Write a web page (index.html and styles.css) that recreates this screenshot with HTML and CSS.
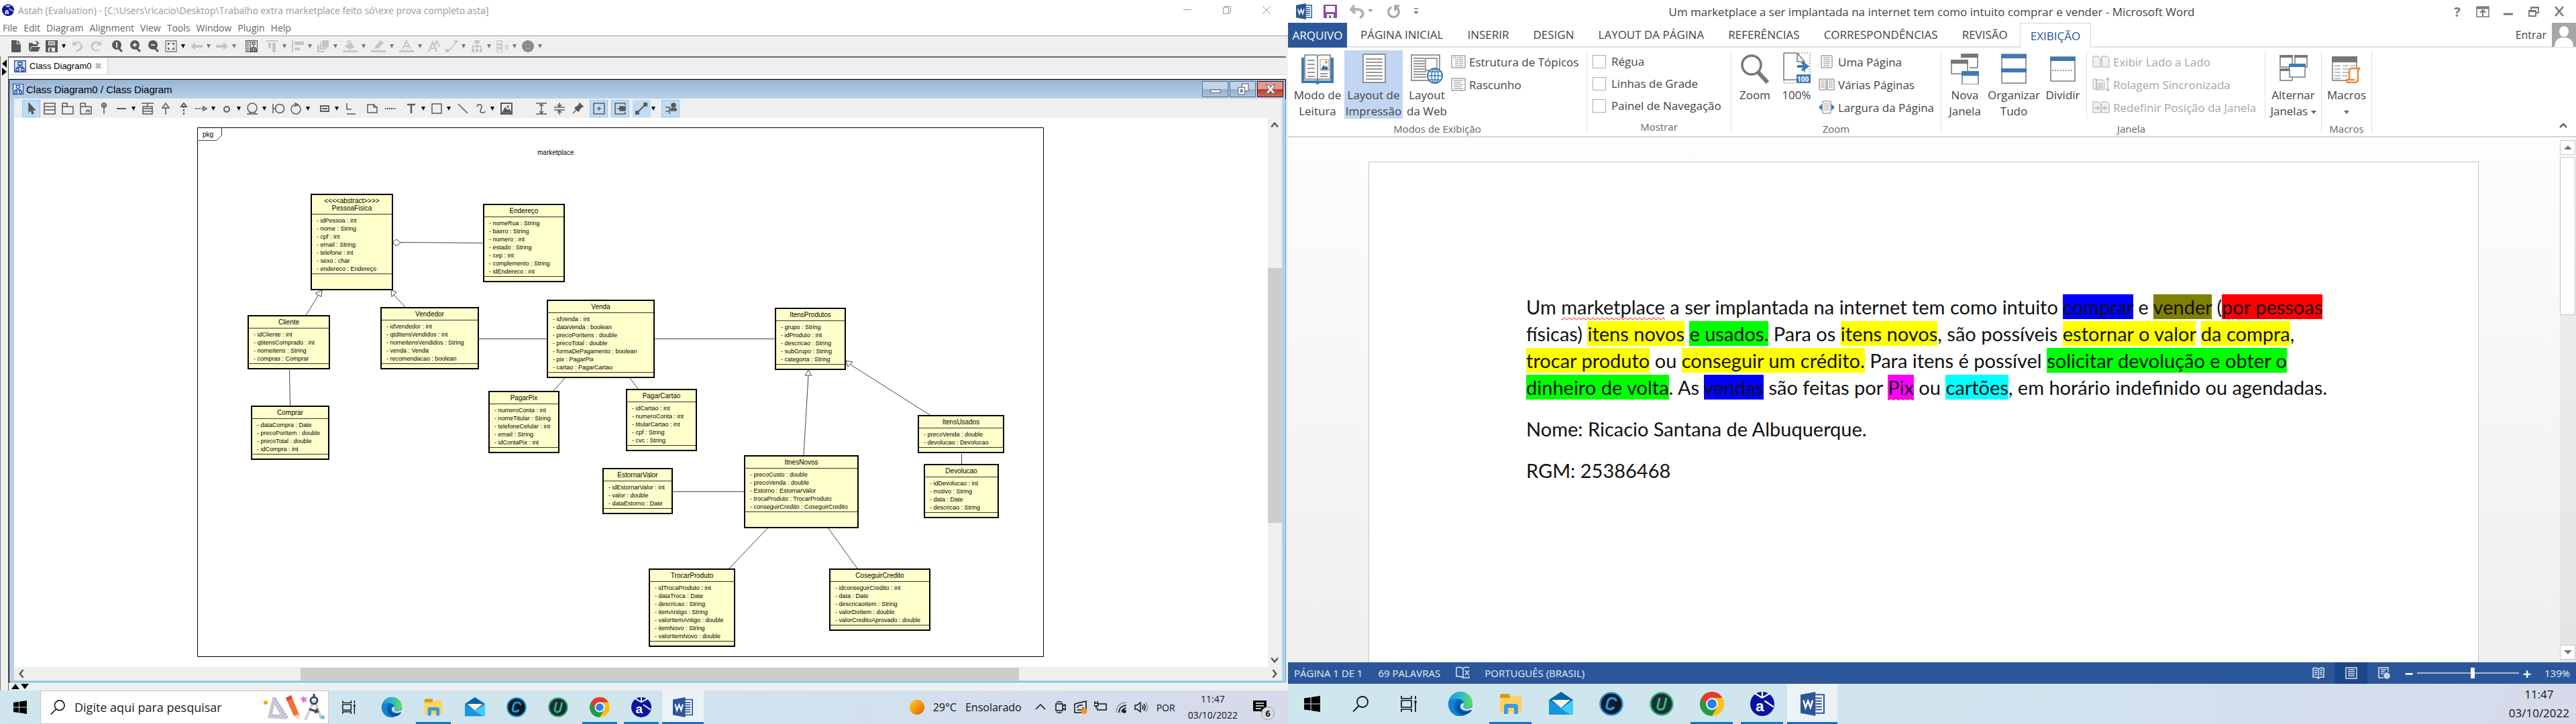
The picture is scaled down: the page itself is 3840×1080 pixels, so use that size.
FILE: index.html
```html
<!DOCTYPE html>
<html lang="pt-BR">
<head>
<meta charset="utf-8">
<title>Astah e Word</title>
<link rel="stylesheet" href="styles.css">
</head>
<body>
<svg class="defs" aria-hidden="true">
  <defs>
    <linearGradient id="gEdge" x1="0" y1="0" x2="1" y2="0"><stop offset="0" stop-color="#1b9de2"/><stop offset=".6" stop-color="#35c1b5"/><stop offset="1" stop-color="#6ae04c"/></linearGradient>
    <linearGradient id="gSun" x1="0" y1="0" x2="1" y2="1"><stop offset="0" stop-color="#ffd21a"/><stop offset="1" stop-color="#e85d00"/></linearGradient>
  </defs>
  <symbol id="start" viewBox="0 0 24 24"><path d="M0 3.500 9.500 2.200V11.400H0zM10.600 2 24 0V11.400H10.600zM0 12.600H9.500V21.800L0 20.500zM10.600 12.600H24V24L10.600 22z"/></symbol>
  <symbol id="search" viewBox="0 0 24 24"><g fill="none" stroke="#111" stroke-width="1.800"><circle cx="15" cy="9" r="8"/><path d="M9.500 15 1 23.500"/></g></symbol>
  <symbol id="taskview" viewBox="0 0 24 24"><path d="M1 0v4h15V0M1 24v-4h15v4M1 7h15v10H1zM22 0v5M22 11v13" fill="none" stroke="#111" stroke-width="1.700"/><path d="M20.500 7h3v4h-3z"/></symbol>
  <symbol id="edge" viewBox="0 0 36 36"><circle cx="18" cy="18" r="18" fill="#0c64b8"/><path d="M1 14C3 5 10 0 18 0c11 0 18 8 18 16 0 6-4 9-9 9-4 0-6-2-5-4 2-3 1-9-6-10C9 10 3 12 1 14z" fill="url(#gEdge)"/><path d="M0 18c2-6 9-8 14-6-5 3-7 9-4 15 2 5 7 8 12 8.500C10 39 0 30 0 18z" fill="#1482d8"/><path d="M16 17c-3 5 1 13 9 13 4 0 7-1 9-3 1 0 1 1 0 2-5 6-13 6-18 1-4-4-4-10 0-13z" fill="#0b4a94"/><path d="M22 17c3 0 0 4 0 5 1 5 9 4 14 0l-1 4c-5 3-12 3-16-1-2-3-1-8 3-8z" fill="#d2e6ef"/></symbol>
  <symbol id="explorer" viewBox="0 0 36 36"><path d="M2 6q0-3 3-3h9q3 0 3 3v5H2z" fill="#d99a0b"/><path d="M2 9h15l3-3h14v23q0 2-2 2H4q-2 0-2-2z" fill="#ffd25c"/><path d="M8 33V22q0-4 4-4h13q4 0 4 4v11h-6v-9h-9v9z" fill="#3a9ae0"/></symbol>
  <symbol id="mail" viewBox="0 0 36 36"><path d="M0 12 18 0l18 12-18 14z" fill="#0563ae"/><path d="M0 12l18 13L36 12v22H0z" fill="#2bb0ea"/><path d="M0 12l34 22H0z" fill="#1696dc"/><path d="M18 25 36 12v22h-4z" fill="#43cbf5"/><path d="M4 12h28L18 24z" fill="#f4f4f6"/></symbol>
  <symbol id="cc" viewBox="0 0 36 36"><circle cx="18" cy="18" r="16.500" fill="#15191c" stroke="#1b93dd" stroke-width="2.500"/><path d="M25 14c0-6-10-6-12-.500l-2 8c-1 5 8 6 11 1" fill="none" stroke="#109df8" stroke-width="3.500"/></symbol>
  <symbol id="uu" viewBox="0 0 36 36"><circle cx="18" cy="18" r="16.500" fill="#262a3b" stroke="#20ba72" stroke-width="2.500"/><path d="M15 9l-3 13c-1 6 9 6 10 0l3-13" fill="none" stroke="#24c57a" stroke-width="3.200"/></symbol>
  <symbol id="chrome" viewBox="0 0 36 36"><circle cx="18" cy="18" r="18" fill="#fbc116"/><path d="M2.400 9A18 18 0 0 0 18 36l8-13.500-8-4.500z" fill="#229a48"/><path d="M18 9h15.600A18 18 0 0 0 2.400 9L10 22z" fill="#e33b2e"/><circle cx="18" cy="18" r="9" fill="#fff"/><circle cx="18" cy="18" r="7" fill="#2f7de9"/></symbol>
  <symbol id="astah" viewBox="0 0 32 32"><circle cx="16" cy="16" r="16" fill="#0a139f"/><path d="M16 8V0M16 8 6 2M16 8l10-6M19 12l12 8" stroke="#fff" stroke-width="2"/><text x="7" y="26" font-family="Liberation Sans" font-weight="bold" font-size="20" fill="#fff">a</text></symbol>
  <symbol id="word" viewBox="0 0 34 34"><path d="M17 4h16v26H17z" fill="#fff" stroke="#2b579a" stroke-width="2"/><path d="M20 9h10M20 13h10M20 17h10M20 21h10M20 25h10" stroke="#2b579a" stroke-width="2"/><path d="M0 4 21 0v34L0 30z" fill="#2b579a"/><path d="M4 12l3 10 3.500-9L14 22l3-10" fill="none" stroke="#fff" stroke-width="2.400"/></symbol>
  <symbol id="dg" viewBox="0 0 18 18"><path d="M.500.500h17v17H.500z" fill="#d9e8fb" stroke="#1c3f9c" stroke-width="1.500"/><path d="M6 3h6v4H6zM9 7v3M5 12v-2h8v2M3 12h4v4H3zM11 12h4v4h-4z" fill="none" stroke="#1c3f9c" stroke-width="1.300"/></symbol>

  <symbol id="new" viewBox="0 0 18 18"><path d="M2 0h8v6h6v12H2z"/><path d="M11 0l5 5h-5z"/></symbol>
  <symbol id="open" viewBox="0 0 18 18"><path d="M1 16V4h5l2 2h6v3H5l-3 7zM5.500 10H18l-3 7H2.500zM9 3c3-3 6-2 6 1h2l-3 3-2-3h1c0-1-2-2-4-1z"/></symbol>
  <symbol id="save" viewBox="0 0 18 18"><path d="M0 0h18v18H0zM4 1.500v6h10v-6zM4 11v6h10v-6z" fill-rule="evenodd"/><path d="M5 3h8v1H5zM5 5h8v1H5zM6 12h3v5H6z"/></symbol>
  <symbol id="undo" viewBox="0 0 18 18"><path d="M1 1v7h7L5.500 5.500C12 2 16 9 11 13l-5 2v2c9 0 12-7 9-11C12 2 7 1 3.500 3.500z"/></symbol>
  <symbol id="redo" viewBox="0 0 18 18"><path d="M17 1v7h-7l2.500-2.500C6 2 2 9 6 13c2 2 5 2 7 0l2 2C7 20-1 13 2 6 5 1 11 0 14.500 3.500z"/></symbol>
  <symbol id="z1" viewBox="0 0 18 18"><circle cx="8" cy="7" r="7"/><path d="M11 12l5 5" stroke-width="3" stroke="#595959"/><path d="M8 3v8" stroke="#efefef" stroke-width="2"/></symbol>
  <symbol id="zin" viewBox="0 0 18 18"><circle cx="8" cy="7" r="7"/><path d="M11 12l5 5" stroke-width="3" stroke="#595959"/><path d="M8 4v6M5 7h6" stroke="#efefef" stroke-width="1.800"/></symbol>
  <symbol id="zout" viewBox="0 0 18 18"><circle cx="8" cy="7" r="7"/><path d="M11 12l5 5" stroke-width="3" stroke="#595959"/><path d="M5 7h6" stroke="#efefef" stroke-width="1.800"/></symbol>
  <symbol id="fit" viewBox="0 0 18 18"><path d="M1 1h16v16H1z" fill="none" stroke="#777" stroke-width="1.300"/><path d="M4 4h4L4 8zM14 4v4l-4-4zM4 14v-4l4 4zM14 14h-4l4-4z"/></symbol>
  <symbol id="al" viewBox="0 0 18 18"><path d="M0 9l7-6v4h11v4H7v4z"/></symbol>
  <symbol id="ar" viewBox="0 0 18 18"><path d="M18 9l-7-6v4H0v4h11v4z"/></symbol>
  <symbol id="struct" viewBox="0 0 18 18"><path d="M.500.500h17v17H.500zM7 0v18M2 3h3M2 6h3M2 9h3M2 12h3M2 15h3M10 3h4v3h-4zM12 6v5M9 14v-3h6v3M8 13h3v3H8zM13 13h3v3h-3z" fill="none" stroke="#595959" stroke-width="1.300"/></symbol>
  <symbol id="atop" viewBox="0 0 18 18"><path d="M0 0h18v2H0zM3 4h4v8H3zM9 4h5v14H9z"/></symbol>
  <symbol id="aleft" viewBox="0 0 18 18"><path d="M0 0h2v18H0zM4 2h14v5H4zM4 11h8v4H4z"/></symbol>
  <symbol id="layers" viewBox="0 0 18 18"><path d="M7 0h10v11H7zM4 3h2v9h8v2H4zM0 7h3v9h8v2H0z"/></symbol>
  <symbol id="bucket" viewBox="0 0 22 18"><path d="M0 15h22v3H0zM3 9l8-6 7 7-8 4z"/><path d="M7 5c0-6 5-6 5 0" fill="none" stroke="#c4c6c6" stroke-width="1.500"/></symbol>
  <symbol id="pen" viewBox="0 0 22 18"><path d="M0 15h22v3H0zM5 13l2-5 8-8 4 4-8 8z"/></symbol>
  <symbol id="fa" viewBox="0 0 22 18"><path d="M0 15h22v3H0z"/><path d="M5 13l6-12 6 12M8 9h6" fill="none" stroke="#c4c6c6" stroke-width="2"/></symbol>
  <symbol id="aa" viewBox="0 0 18 18"><path d="M1 17 7 3l6 14M4 12h6M10 8l3-7 4 9" fill="none" stroke="#c4c6c6" stroke-width="2.200"/></symbol>
  <symbol id="ln" viewBox="0 0 18 18"><path d="M3 15h3L15 4V2" fill="none" stroke="#c4c6c6" stroke-width="1.500"/><path d="M0 13h5v5H0zM13 0h5v4h-5z"/></symbol>
  <symbol id="tree" viewBox="0 0 18 18"><path d="M5 0h8v4H5zM8 4h2v8H8zM2 8h14v2H2zM2 8h1.500v6H2zM14.500 8H16v6h-1.500zM1 13h4v5H1zM7 13h4v5H7zM13 13h4v5h-4z"/></symbol>
  <symbol id="flow" viewBox="0 0 18 18"><path d="M0 1h8v5H0zM0 7h8v4H0zM0 13h8v5H0zM14 8h4v4h-4z" fill="none" stroke="#c4c6c6" stroke-width="1.400"/></symbol>
  <symbol id="smile" viewBox="0 0 18 18"><circle cx="9" cy="9" r="9" fill="#8a8a8a"/><path d="M5 6h2M11 6h2M5 11q4 4 8 0" stroke="#b5b5b5" fill="none"/></symbol>

  <symbol id="ptr" viewBox="0 0 18 18"><path d="M5 1v13l3-3 2 6 2-1-2-5h4z"/></symbol>
  <symbol id="cls" viewBox="0 0 18 18"><path d="M1 1h16v16H1zM1 6h16M1 11h16"/></symbol>
  <symbol id="pkgi" viewBox="0 0 18 18"><path d="M1 6v11h16V6zM1 6V1h7v5"/></symbol>
  <symbol id="sub" viewBox="0 0 18 18"><path d="M1 6v11h16V6zM1 6V1h7v5M10 15v-3h4v3M12 12v-2"/></symbol>
  <symbol id="pin" viewBox="0 0 18 18"><circle cx="9" cy="4" r="3.500"/><path d="M9 0v17M6 4h6"/></symbol>
  <symbol id="dash" viewBox="0 0 18 18"><path d="M2 9h14" stroke-width="2"/></symbol>
  <symbol id="acl" viewBox="0 0 18 18"><path d="M0 1h18M9 1v5M2 6h14v11H2zM2 9h14M2 13h14"/></symbol>
  <symbol id="up" viewBox="0 0 18 18"><path d="M9 18V7M4 8l5-7 5 7z"/></symbol>
  <symbol id="dup" viewBox="0 0 18 18"><path d="M9 18v-3M9 13v-3M9 8V6M5 6l4-5 4 5z" stroke-width="2"/></symbol>
  <symbol id="dright" viewBox="0 0 18 18"><path d="M0 9h4M5 9h3M9 9h3M12 6l5 3-5 3z"/></symbol>
  <symbol id="oo" viewBox="0 0 18 18"><circle cx="9" cy="10" r="4" stroke-width="2"/></symbol>
  <symbol id="om" viewBox="0 0 18 18"><circle cx="9" cy="8" r="7"/><path d="M1 17h16M5 14v3M13 14v3"/></symbol>
  <symbol id="io" viewBox="0 0 18 18"><path d="M1 2v14M1 9h4"/><circle cx="11" cy="9" r="6.500"/></symbol>
  <symbol id="ring" viewBox="0 0 18 18"><circle cx="9" cy="10" r="7"/><path d="M7 0l5 3-5 3"/></symbol>
  <symbol id="part" viewBox="0 0 18 18"><path d="M3 5h12v8H3zM5 9h8" stroke-width="1.800"/></symbol>
  <symbol id="ll" viewBox="0 0 18 18"><path d="M3 1v9h7M3 17h13" /></symbol>
  <symbol id="note" viewBox="0 0 18 18"><path d="M2 3h9l5 4v8H2zM11 3v4h5"/></symbol>
  <symbol id="dots" viewBox="0 0 18 18"><path d="M1 9h16" stroke-width="2" stroke-dasharray="2 1"/></symbol>
  <symbol id="tt" viewBox="0 0 18 18"><path d="M3 3h12M9 3v13" stroke-width="2.500"/></symbol>
  <symbol id="rect" viewBox="0 0 18 18"><path d="M2 2h14v14H2z"/></symbol>
  <symbol id="diag" viewBox="0 0 18 18"><path d="M2 2l14 14"/></symbol>
  <symbol id="curve" viewBox="0 0 18 18"><path d="M4 6c1-5 8-4 7 1-1 4-5 8 2 8 2 0 3-1 3-2"/></symbol>
  <symbol id="img" viewBox="0 0 18 18"><path d="M1 1h16v16H1z" stroke-width="2"/><path d="M3 15l4-7 4 4 2-2 3 5z" fill="#595959"/><circle cx="11" cy="6" r="1"/></symbol>
  <symbol id="vsp" viewBox="0 0 18 18"><path d="M1 1h16M1 17h16M9 3v12M6 5l3-3 3 3M6 13l3 3 3-3"/></symbol>
  <symbol id="vsq" viewBox="0 0 18 18"><path d="M1 7h16M1 11h16M9 0v6M9 12v6M6 3l3 3 3-3M6 15l3-3 3 3"/></symbol>
  <symbol id="tack" viewBox="0 0 18 18"><path d="M2 16l6-6"/><path d="M5 8l6-4 1-3 5 5-3 1-4 6z" fill="#595959"/></symbol>
  <symbol id="plusb" viewBox="0 0 18 18"><path d="M1 1h16v16H1zM9 6v6M6 9h6"/></symbol>
  <symbol id="sideb" viewBox="0 0 18 18"><path d="M16 4V1H1v16h15v-3"/><path d="M8 6h8v6H8zM4 9h4" fill="#595959"/></symbol>
  <symbol id="diagb" viewBox="0 0 18 18"><path d="M4 14 14 4" stroke-width="2"/><path d="M0 13h5v5H0zM13 0h5v5h-5z" fill="#595959"/></symbol>
  <symbol id="net" viewBox="0 0 18 18"><path d="M1 7h6v10M1 13h5"/><circle cx="13" cy="4" r="3" fill="#595959"/><path d="M9 9h8v3H9zM13 7v2" fill="#595959"/></symbol>
</svg>

<main class="desktop">
<section class="screen" aria-label="Astah">
  <header class="a-title">
    <svg class="ic18"><use href="#astah"/></svg>
    <span>Astah (Evaluation) - [C:\Users\ricacio\Desktop\Trabalho extra marketplace feito só\exe prova completo.asta]</span>
    <div class="a-controls">
      <button aria-label="Minimizar"><svg viewBox="0 0 14 14"><path d="M1 6.500h12"/></svg></button>
      <button aria-label="Restaurar"><svg viewBox="0 0 14 14"><path d="M1.500 3.500h8v9h-8zM3.500 3V1.500h9v9H10"/></svg></button>
      <button aria-label="Fechar"><svg viewBox="0 0 14 14"><path d="M1 1l12 12M13 1 1 13"/></svg></button>
    </div>
  </header>
  <nav class="a-menu">
    <button>File</button><button>Edit</button><button>Diagram</button><button>Alignment</button><button>View</button><button>Tools</button><button>Window</button><button>Plugin</button><button>Help</button>
  </nav>
  <div class="a-bar main-bar">
    <button aria-label="Novo"><svg><use href="#new"/></svg></button>
    <button aria-label="Abrir"><svg><use href="#open"/></svg></button>
    <button class="drop" aria-label="Salvar"><svg><use href="#save"/></svg></button>
    <button class="off" aria-label="Desfazer"><svg><use href="#undo"/></svg></button>
    <button class="off" aria-label="Refazer"><svg><use href="#redo"/></svg></button>
    <button class="sep" aria-label="Zoom 1:1"><svg><use href="#z1"/></svg></button>
    <button aria-label="Ampliar"><svg><use href="#zin"/></svg></button>
    <button aria-label="Reduzir"><svg><use href="#zout"/></svg></button>
    <button class="drop" aria-label="Ajustar"><svg><use href="#fit"/></svg></button>
    <button class="drop off" aria-label="Voltar"><svg><use href="#al"/></svg></button>
    <button class="drop off" aria-label="Avançar"><svg><use href="#ar"/></svg></button>
    <button class="sep" aria-label="Estrutura"><svg><use href="#struct"/></svg></button>
    <button class="sep drop off" aria-label="Alinhar topo"><svg><use href="#atop"/></svg></button>
    <button class="drop off" aria-label="Alinhar à esquerda"><svg><use href="#aleft"/></svg></button>
    <button class="drop off" aria-label="Ordem"><svg><use href="#layers"/></svg></button>
    <button class="drop off wide" aria-label="Preenchimento"><svg><use href="#bucket"/></svg></button>
    <button class="drop off wide" aria-label="Linha"><svg><use href="#pen"/></svg></button>
    <button class="drop off wide" aria-label="Cor da fonte"><svg><use href="#fa"/></svg></button>
    <button class="off" aria-label="Fonte"><svg><use href="#aa"/></svg></button>
    <button class="drop off" aria-label="Conector"><svg><use href="#ln"/></svg></button>
    <button class="drop off" aria-label="Árvore"><svg><use href="#tree"/></svg></button>
    <button class="drop off" aria-label="Fluxo"><svg><use href="#flow"/></svg></button>
    <button class="drop off" aria-label="Ícone"><svg><use href="#smile"/></svg></button>
  </div>
  <div class="a-work">
    <div class="a-split"><i class="tri left"></i><i class="tri right"></i></div>
    <div class="a-main">
      <div class="a-tabs"><button class="a-tab"><svg class="ic18"><use href="#dg"/></svg>Class Diagram0<b>✖</b></button></div>
      <div class="a-strip"></div>
      <div class="a-frame">
        <div class="f-title">
          <svg class="ic18"><use href="#dg"/></svg><span>Class Diagram0 / Class Diagram</span>
          <div class="f-controls">
            <button aria-label="Minimizar"><svg viewBox="0 0 20 20"><path d="M2 11h16v5H2z"/></svg></button>
            <button aria-label="Restaurar"><svg viewBox="0 0 20 20"><path d="M8 1h11v12H8z"/><path d="M2 7h11v12H2zM6 11h3v4H6z" fill-rule="evenodd"/></svg></button>
            <button class="close" aria-label="Fechar"><svg viewBox="0 0 20 20"><path d="M2 3h5l3 4 3-4h5l-5 7 5 7h-5l-3-4-3 4H2l5-7z"/></svg></button>
          </div>
        </div>
        <div class="f-body">
          <div class="a-bar tool-bar">
            <button class="on" aria-label="Selecionar"><svg class="solid"><use href="#ptr"/></svg></button>
            <button aria-label="Classe"><svg><use href="#cls"/></svg></button>
            <button aria-label="Pacote"><svg><use href="#pkgi"/></svg></button>
            <button aria-label="Subsistema"><svg><use href="#sub"/></svg></button>
            <button aria-label="Contenção"><svg><use href="#pin"/></svg></button>
            <button class="drop" aria-label="Associação"><svg><use href="#dash"/></svg></button>
            <button aria-label="Classe de associação"><svg><use href="#acl"/></svg></button>
            <button aria-label="Generalização"><svg><use href="#up"/></svg></button>
            <button aria-label="Realização"><svg><use href="#dup"/></svg></button>
            <button class="drop" aria-label="Dependência"><svg><use href="#dright"/></svg></button>
            <button class="drop" aria-label="Interface"><svg><use href="#oo"/></svg></button>
            <button class="drop" aria-label="Entidade"><svg><use href="#om"/></svg></button>
            <button aria-label="Fronteira"><svg><use href="#io"/></svg></button>
            <button class="drop" aria-label="Controle"><svg><use href="#ring"/></svg></button>
            <button class="drop sep" aria-label="Instância"><svg><use href="#part"/></svg></button>
            <button aria-label="Ligação"><svg><use href="#ll"/></svg></button>
            <button class="sep" aria-label="Nota"><svg><use href="#note"/></svg></button>
            <button aria-label="Âncora"><svg><use href="#dots"/></svg></button>
            <button class="drop sep" aria-label="Texto"><svg><use href="#tt"/></svg></button>
            <button class="drop" aria-label="Retângulo"><svg><use href="#rect"/></svg></button>
            <button aria-label="Linha"><svg><use href="#diag"/></svg></button>
            <button class="drop" aria-label="Curva"><svg><use href="#curve"/></svg></button>
            <button aria-label="Imagem"><svg><use href="#img"/></svg></button>
            <button class="far" aria-label="Expandir"><svg><use href="#vsp"/></svg></button>
            <button aria-label="Recolher"><svg><use href="#vsq"/></svg></button>
            <button aria-label="Fixar"><svg><use href="#tack"/></svg></button>
            <button class="on sep" aria-label="Sugestão"><svg><use href="#plusb"/></svg></button>
            <button class="on sep" aria-label="Guia"><svg><use href="#sideb"/></svg></button>
            <button class="on sep drop" aria-label="Estilo de linha"><svg><use href="#diagb"/></svg></button>
            <button class="on sep" aria-label="Rede"><svg><use href="#net"/></svg></button>
          </div>
          <div class="c-row">
            <div class="canvas">
              <svg class="links" width="1536" height="804" viewBox="21 176 1536 804">
                <path d="M294.500 190.500H1555.500V979.500H294.500z" stroke="#000"/>
                <path d="M294 209.500H323L330.500 202V190"/>
                <path d="M597 361.500 720 362.500M475 440 456 470M587 440 604 458M714 505.500H815M976 505.500H1155M431.500 552 432.500 605M842 564 825 583M939 564 951 580M1205 560 1198 679M1268 544 1386 619M1433.500 677V692M1003 733.500H1109M1145 787 1087 848M1234 787 1278 848"/>
                <path fill="#fff" d="M585 362l6-5 6 5-6 5zM480 433l-10 4.500 9 5zM583 433l8 3-7 7zM1205 552l-5 8h10zM1261 538l10 2-7 7z"/>
              </svg>
              <span class="label pkg">pkg</span>
              <span class="label market">marketplace</span>
              <article class="uml pessoa tall"><h3>&lt;&lt;&lt;&lt;abstract&gt;&gt;&gt;&gt;<br>PessoaFisica</h3><ul><li>- idPessoa : int</li><li>- nome : String</li><li>- cpf : int</li><li>- email : String</li><li>- telefone : int</li><li>- sexo : char</li><li>- endereco : Endereço</li></ul></article>
              <article class="uml endereco"><h3>Endereço</h3><ul><li>- nomeRua : String</li><li>- bairro : String</li><li>- numero : int</li><li>- estado : String</li><li>- cep : int</li><li>- complemento : String</li><li>- idEndereco : int</li></ul></article>
              <article class="uml cliente"><h3>Cliente</h3><ul><li>- idCliente : int</li><li>- qtitensComprado : int</li><li>- nomeItens : String</li><li>- compras : Comprar</li></ul></article>
              <article class="uml comprar"><h3>Comprar</h3><ul><li>- dataCompra : Date</li><li>- precoPorItem : double</li><li>- precoTotal : double</li><li>- idCompra : int</li></ul></article>
              <article class="uml vendedor"><h3>Vendedor</h3><ul><li>- idVendedor : int</li><li>- qtdItensVendidos : int</li><li>- nomeItensVendidos : String</li><li>- venda : Venda</li><li>- recomendacao : boolean</li></ul></article>
              <article class="uml venda"><h3>Venda</h3><ul><li>- idVenda : int</li><li>- dataVenda : boolean</li><li>- precoPorItens : double</li><li>- precoTotal : double</li><li>- formaDePagamento : boolean</li><li>- pix : PagarPix</li><li>- cartao : PagarCartao</li></ul></article>
              <article class="uml pagarpix"><h3>PagarPix</h3><ul><li>- numeroConta : int</li><li>- nomeTitular : String</li><li>- telefoneCelular : int</li><li>- email : String</li><li>- idContaPix : int</li></ul></article>
              <article class="uml pagarcartao"><h3>PagarCartao</h3><ul><li>- idCartao : int</li><li>- numeroConta : int</li><li>- titularCartao : int</li><li>- cpf : String</li><li>- cvc : String</li></ul></article>
              <article class="uml itensprodutos"><h3>ItensProdutos</h3><ul><li>- grupo : String</li><li>- idProduto : int</li><li>- descricao : String</li><li>- subGrupo : String</li><li>- categoria : String</li></ul></article>
              <article class="uml estornar"><h3>EstornarValor</h3><ul><li>- idEstornarValor : int</li><li>- valor : double</li><li>- dataEstorno : Date</li></ul></article>
              <article class="uml itensnovos tall"><h3>ItnesNovos</h3><ul><li>- precoCusto : double</li><li>- precoVenda : double</li><li>- Estorno : EstornarValor</li><li>- trocaProduto : TrocarProduto</li><li>- conseguirCredito : CoseguirCredito</li></ul></article>
              <article class="uml itensusados"><h3>ItensUsados</h3><ul><li>- precoVenda : double</li><li>- devolucao : Devolucao</li></ul></article>
              <article class="uml devolucao"><h3>Devolucao</h3><ul><li>- idDevolucao : int</li><li>- motivo : String</li><li>- data : Date</li><li>- descricao : String</li></ul></article>
              <article class="uml trocar"><h3>TrocarProduto</h3><ul><li>- idTrocaProduto : int</li><li>- dataTroca : Date</li><li>- descricao : String</li><li>- itemAntigo : String</li><li>- valorItemAntigo : double</li><li>- itemNovo : String</li><li>- valorItemNovo : double</li></ul></article>
              <article class="uml coseguir"><h3>CoseguirCredito</h3><ul><li>- idconseguirCredito : int</li><li>- data : Date</li><li>- descricaoItem : String</li><li>- valorDoItem : double</li><li>- valorCreditoAprovado : double</li></ul></article>
            </div>
            <div class="vbar"><svg viewBox="0 0 10 10"><path d="M1 8l4-5 4 5"/></svg><i></i><svg viewBox="0 0 10 10"><path d="M1 2l4 5 4-5"/></svg></div>
          </div>
          <div class="hbar"><svg viewBox="0 0 10 10"><path d="M8 0 4 5l4 5"/></svg><i></i><svg viewBox="0 0 10 10"><path d="M2 0l4 5-4 5"/></svg></div>
        </div>
      </div>
      <div class="a-foot"><i class="tri up"></i><i class="tri down"></i></div>
    </div>
  </div>
  <footer class="taskbar small">
    <button class="t-start" aria-label="Iniciar"><svg><use href="#start"/></svg></button>
    <div class="t-search">
      <svg class="mag"><use href="#search"/></svg>
      <input type="text" aria-label="Pesquisar" placeholder="Digite aqui para pesquisar">
      <svg class="deco" viewBox="0 0 92 40"><circle cx="3" cy="13" r="3" fill="#f7a600"/><path d="M14 3 36 38 6 36z" fill="#c9c6d0"/><path d="M16 16 25 31 13 30z" fill="#fff"/><path d="M17 6 36 36" stroke="#8d62d9" stroke-dasharray="2 2" stroke-width="2"/><path d="M33 6l8-4 12 29-2 6-6-4z" fill="#f07038"/><path d="M33 6l8-4 2 5-8 4z" fill="#d94a3a"/><path d="M45 33l7-3-1 7z" fill="#f6d8bd"/><path d="M58 3l3 3 4-1-2 4 2 3-4-1-3 3-1-5-3-2 4-1z" fill="#e070f0"/><path d="M75 10 62 39M76 10l10 27" stroke="#cfd0da" stroke-width="4"/><circle cx="75" cy="10" r="5" fill="none" stroke="#454566" stroke-width="3"/><path d="M75 0v5M68 23l14 4M80 22l-3 7" stroke="#454566" stroke-width="3"/><circle cx="88" cy="35" r="3" fill="#60c8e8"/></svg>
    </div>
    <button class="t-view" aria-label="Visão de tarefas"><svg><use href="#taskview"/></svg></button>
    <div class="t-apps">
      <button aria-label="Edge"><svg><use href="#edge"/></svg></button>
      <button class="run" aria-label="Explorador"><svg><use href="#explorer"/></svg></button>
      <button aria-label="Email"><svg><use href="#mail"/></svg></button>
      <button aria-label="CCleaner"><svg><use href="#cc"/></svg></button>
      <button aria-label="Uninstaller"><svg><use href="#uu"/></svg></button>
      <button class="run" aria-label="Chrome"><svg><use href="#chrome"/></svg></button>
      <button class="run" aria-label="Astah"><svg><use href="#astah"/></svg></button>
      <button class="run active" aria-label="Word"><svg><use href="#word"/></svg></button>
    </div>
    <div class="tray">
      <button class="weather"><svg viewBox="0 0 22 22"><circle cx="11" cy="11" r="11" fill="url(#gSun)"/></svg><span>29°C</span><span>Ensolarado</span></button>
      <svg class="ti" viewBox="0 0 20 20"><path d="M3 13l7-7 7 7"/></svg>
      <svg class="ti" viewBox="0 0 20 20"><path d="M3 5h10v10H3zM13 8l4-2v8l-4-2M4 3q4-3 8 0M4 17q4 3 8 0"/></svg>
      <svg class="ti" viewBox="0 0 20 20"><path d="M1 5l17-4v13M1 5v13h11M5 11q1-5 8-4M5 14h6q3-1 3-4"/><circle cx="15" cy="16" r="4.500" fill="#f7931e" stroke="none"/></svg>
      <svg class="ti" viewBox="0 0 20 20"><path d="M7 5h11v9H5v-3M0 4h6v4H0zM1 1v3M5 1v3M3 8v4"/></svg>
      <svg class="ti" viewBox="0 0 20 20"><path d="M3 18C3 9 9 3 18 3" stroke="#8c929a"/><path d="M7 18c0-6 4-10 11-11M11 18c0-4 3-7 7-7"/><circle cx="15" cy="16" r="2" fill="#111"/></svg>
      <svg class="ti" viewBox="0 0 20 20"><path d="M1 7h3l5-4v14l-5-4H1zM12 7q2 3 0 6M14 5q4 5 0 10"/><path d="M17 3q5 7 0 14" stroke="#8c929a"/></svg>
      <span class="lang">POR</span>
      <div class="clock"><span>11:47</span><span>03/10/2022</span></div>
      <button class="notif" aria-label="Notificações"><svg viewBox="0 0 20 20"><path d="M0 0h20v16h-5v4l-4-4H0z"/><path d="M4 4h12M4 8h12M4 12h8" stroke="#fff" stroke-width="1.500"/></svg><b>6</b></button>
    </div>
  </footer>
</section>

<section class="screen" aria-label="Word">
  <header class="w-title">
    <svg class="w24"><use href="#word"/></svg>
    <svg class="w20" viewBox="0 0 20 20"><path d="M0 0h20v20H0zM3 2v9h14V2zM5 14v6h10v-6z" fill="#8a4bab" fill-rule="evenodd"/><path d="M8 16h3v4H8z" fill="#8a4bab"/></svg>
    <svg class="w30" viewBox="0 0 34 22"><path d="M7 2 2 8l6 6M3 8h9c9 0 10 11 3 12" fill="none" stroke="#b3b3b3" stroke-width="4"/><path d="M27 8h8l-4 4z" fill="#999"/></svg>
    <svg class="w20 redo" viewBox="0 0 22 22"><path d="M15 4a8.500 8.500 0 1 1-7 0M14 10V2h7" fill="none" stroke="#a8a8a8" stroke-width="3.500"/></svg>
    <svg class="w8" viewBox="0 0 8 10"><path d="M1 1h6" stroke="#777" stroke-width="1.500"/><path d="M0 5h8L4 9z" fill="#777"/></svg>
    <h1>Um marketplace a ser implantada na internet tem como intuito comprar e vender - Microsoft Word</h1>
    <div class="w-controls">
      <button aria-label="Ajuda">?</button>
      <button aria-label="Opções da faixa"><svg viewBox="0 0 20 20"><path d="M1 3h18v15H1z"/><path d="M1 5h18" stroke-width="3"/><path d="M10 17V9M6 12l4-4 4 4" stroke-width="2"/></svg></button>
      <button aria-label="Minimizar"><svg viewBox="0 0 20 20"><path d="M3 14h14" stroke-width="3"/></svg></button>
      <button aria-label="Restaurar"><svg viewBox="0 0 20 20"><path d="M3 9h10v8H3zM3 10h10M6 8V4h11v8h-3M6 4.500h11" stroke-width="1.800"/></svg></button>
      <button aria-label="Fechar"><svg viewBox="0 0 20 20"><path d="M4 3l12 14M16 3 4 17" stroke-width="2.500"/></svg></button>
    </div>
  </header>
  <nav class="w-tabs">
    <button class="file">ARQUIVO</button><button>PÁGINA INICIAL</button><button>INSERIR</button><button>DESIGN</button><button>LAYOUT DA PÁGINA</button><button>REFERÊNCIAS</button><button>CORRESPONDÊNCIAS</button><button>REVISÃO</button><button class="sel">EXIBIÇÃO</button>
    <a class="login" href="#">Entrar</a>
    <svg class="avatar" viewBox="0 0 36 36"><path d="M0 0h36v36H0z" fill="#a6a6a6"/><ellipse cx="18" cy="13" rx="7" ry="8" fill="#fff"/><path d="M4 36c0-10 5-14 14-14s14 4 14 14z" fill="#fff"/></svg>
  </nav>
  <div class="ribbon">
    <div class="group g-modes">
      <div class="g-body">
        <button class="big"><svg viewBox="0 0 48 48"><path d="M2 8v36h20l2 2 2-2h20V8" fill="#fff" stroke="#3e7ab5" stroke-width="4"/><path d="M5 4h17l2 2 2-2h17v36H26l-2 2-2-2H5zM24 6v36" fill="#fff" stroke="#777" stroke-width="1.500"/><path d="M9 12h11M9 18h11M9 24h11M9 30h11M9 36h11M28 32h11M28 36h11" stroke="#777" stroke-width="1.500"/><path d="M28 11h13v16H28z" fill="#fff" stroke="#999"/><path d="M29 26l4-7 3 3 2-2 2 6z" fill="#2e6da8"/><circle cx="37" cy="15" r="2" fill="#e8963a"/></svg><span>Modo de<br>Leitura</span></button>
        <button class="big current"><svg viewBox="0 0 48 48"><path d="M8 3h33v42H8z" fill="#fff" stroke="#777" stroke-width="1.500"/><path d="M12 10h25M12 15h25M12 20h25M12 25h25M12 30h25M12 35h25M12 40h25" stroke="#777" stroke-width="1.500"/></svg><span>Layout de<br>Impressão</span></button>
        <button class="big web"><svg viewBox="0 0 48 48"><path d="M1 4h42v38H1z" fill="#fff" stroke="#777" stroke-width="1.500"/><path d="M4 9h17M4 13h17M4 17h17M4 21h17M4 25h17M4 29h19M4 33h19M4 37h19" stroke="#777" stroke-width="1.300"/><path d="M22 9h17v18H22z" fill="#fff" stroke="#777" stroke-width="1.300"/><circle cx="36" cy="35" r="11" fill="#fff" stroke="#3e7ab5" stroke-width="2"/><path d="M25 35h22M36 24v22M28 29h16M28 41h16" stroke="#3e7ab5" stroke-width="1.500"/><ellipse cx="36" cy="35" rx="5" ry="11" fill="none" stroke="#3e7ab5" stroke-width="1.500"/></svg><span>Layout<br>da Web</span></button>
        <div class="stack">
          <button><svg viewBox="0 0 22 20"><path d="M1 1h20v18H1z" fill="#fff" stroke="#777"/><path d="M3 4h5M6 7h5M6 10h5M6 13h5M6 16h5M10 4h8M12 7h6M12 10h6M12 13h6M12 16h6" stroke="#888"/></svg>Estrutura de Tópicos</button>
          <button><svg viewBox="0 0 22 20"><path d="M1 1h20v18H1z" fill="#fff" stroke="#777"/><path d="M4 4h14M4 7h11M4 10h14M4 13h11M4 16h14" stroke="#888"/></svg>Rascunho</button>
        </div>
      </div>
      <h2>Modos de Exibição</h2>
    </div>
    <div class="group g-show">
      <div class="g-body"><div class="stack">
        <label><input type="checkbox">Régua</label>
        <label><input type="checkbox">Linhas de Grade</label>
        <label><input type="checkbox">Painel de Navegação</label>
      </div></div>
      <h2>Mostrar</h2>
    </div>
    <div class="group g-zoom">
      <div class="g-body">
        <button class="big"><svg viewBox="0 0 48 48"><circle cx="19" cy="19" r="14" fill="none" stroke="#777" stroke-width="3.500"/><path d="M28 29l15 16" stroke="#777" stroke-width="6"/></svg><span>Zoom</span></button>
        <button class="big"><svg viewBox="0 0 48 48"><path d="M5 1v40h22M5 1h20l11 13v16M25 1v13h11" fill="none" stroke="#777" stroke-width="1.500"/><path d="M27 1h17v32M5 42v4h18" fill="none" stroke="#777" stroke-dasharray="2 2"/><path d="M25 21h12M32 15l8 6-8 6" fill="none" stroke="#3e7ab5" stroke-width="4"/><path d="M24 33h21v13H24z" fill="#3e7ab5"/><text x="25" y="44" font-family="Open Sans" font-weight="bold" font-size="10" fill="#fff">100</text></svg><span>100%</span></button>
        <div class="stack">
          <button><svg viewBox="0 0 24 20"><path d="M4 1h16v18H4z" fill="#fff" stroke="#777"/><path d="M7 4h10M7 7h10M7 10h10M7 13h10M7 16h10" stroke="#888"/></svg>Uma Página</button>
          <button><svg viewBox="0 0 24 20"><path d="M1 2h10v16H1zM13 2h10v16H13z" fill="#fff" stroke="#777"/><path d="M3 5h6M3 8h6M3 11h6M3 14h6M15 5h6M15 8h6M15 11h6M15 14h6" stroke="#888"/></svg>Várias Páginas</button>
          <button><svg viewBox="0 0 24 20"><path d="M6 1h12v18H6z" fill="#fff" stroke="#777"/><path d="M8 5h8M8 8h8M8 11h8M8 14h8" stroke="#888"/><path d="M5 5v10L0 10zM19 5v10l5-5z" fill="#3e7ab5"/></svg>Largura da Página</button>
        </div>
      </div>
      <h2>Zoom</h2>
    </div>
    <div class="group g-win">
      <div class="g-body">
        <button class="big"><svg viewBox="0 0 48 48"><path d="M19 3h24v20H31M4 12h24v20H4zM20 30h24v18H20z" fill="#fff" stroke="#777" stroke-width="1.500"/><path d="M18 2h26v6H18zM3 11h26v6H3z" fill="#777"/><path d="M19 28h26v7H19z" fill="#3e7ab5"/></svg><span>Nova<br>Janela</span></button>
        <button class="big"><svg viewBox="0 0 48 48"><path d="M6 3h36v43H6z" fill="#fff" stroke="#777" stroke-width="1.500"/><path d="M5 3h38v6H5zM5 24h38v6H5z" fill="#3e7ab5"/></svg><span>Organizar<br>Tudo</span></button>
        <button class="big"><svg viewBox="0 0 48 48"><path d="M6 7h36v36H6z" fill="#fff" stroke="#777" stroke-width="1.500"/><path d="M5 7h38v6H5z" fill="#3e7ab5"/><path d="M8 27h32" stroke="#3e7ab5" stroke-width="1.500" stroke-dasharray="2 2"/></svg><span>Dividir</span></button>
        <div class="stack side">
          <button disabled><svg viewBox="0 0 26 20"><path d="M1 2h8l3 3v13H1zM14 2h8l3 3v13H14z" fill="#f4eef6" stroke="#aaa"/></svg>Exibir Lado a Lado</button>
          <button disabled><svg viewBox="0 0 26 20"><path d="M1 2h5v15H1zM6 3h9l3 3v12H6z" fill="#f4eef6" stroke="#aaa"/><path d="M8 9h8M8 12h8M8 15h8M23 0v20M20 4l3-4 3 4M20 16l3 4 3-4" fill="none" stroke="#999"/></svg>Rolagem Sincronizada</button>
          <button disabled><svg viewBox="0 0 26 20"><path d="M1 2h8l3 3v13H1zM14 2h8l3 3v13H14z" fill="#f4eef6" stroke="#aaa"/><path d="M3 11h7M7 8l3 3-3 3M23 11h-7M19 8l-3 3 3 3" fill="none" stroke="#999"/></svg>Redefinir Posição da Janela</button>
        </div>
        <button class="big"><svg viewBox="0 0 48 48"><path d="M4 5h18v17H4zM26 5h18v17H26zM4 25h18v17H4z" fill="#fff" stroke="#777" stroke-width="1.500"/><path d="M3 4h20v4H3zM25 4h20v4H25zM3 24h16v4H3z" fill="#777"/><path d="M18 18h23v19H18z" fill="#fff" stroke="#777" stroke-width="1.500"/><path d="M17 17h25v5H17z" fill="#3e7ab5"/></svg><span>Alternar<br>Janelas <i class="car"></i></span></button>
      </div>
      <h2>Janela</h2>
    </div>
    <div class="group g-macro">
      <div class="g-body"><button class="big"><svg viewBox="0 0 48 48"><path d="M3 7h36v35H3z" fill="#fff" stroke="#777" stroke-width="1.500"/><path d="M2 6h38v9H2z" fill="#777"/><path d="M6 20h9M18 20h9M30 20h7M6 25h9M18 25h9M6 30h9M18 30h9M6 35h9M18 35h7M6 39h9" stroke="#aaa" stroke-width="1.500"/><path d="M28 42V28q0-4 4-4h12q-3 1-3 5v11q0 5-5 5H26q-3-1-2-4h12" fill="#fff" stroke="#e28a3b" stroke-width="2.500"/></svg><span>Macros<br><i class="car"></i></span></button></div>
      <h2>Macros</h2>
    </div>
    <button class="collapse" aria-label="Recolher faixa"><svg viewBox="0 0 14 14"><path d="M2 9l5-5 5 5" fill="none" stroke="#666" stroke-width="2.500"/></svg></button>
  </div>
  <div class="w-doc">
    <div class="paper">
      <p>Um <u class="sq">marketplace</u> a ser implantada na internet tem como intuito <mark class="blue">comprar</mark> e <mark class="olive">vender</mark> (<mark class="red">por pessoas</mark><br>
      físicas) <mark>itens novos</mark> <mark class="green">e usados.</mark> Para os <mark>itens novos</mark>, são possíveis <mark>estornar o valor</mark> <mark>da compra</mark>,<br>
      <mark>trocar produto</mark> ou <mark>conseguir um crédito.</mark> Para itens é possível <mark class="green">solicitar devolução e obter o</mark><br>
      <mark class="green">dinheiro de volta</mark>. As <mark class="blue">vendas</mark> são feitas por <mark class="pink"><u class="sq">Pix</u></mark> ou <mark class="cyan">cartões</mark>, em horário indefinido ou agendadas.</p>
      <p>Nome: Ricacio Santana de Albuquerque.</p>
      <p>RGM: 25386468</p>
    </div>
    <div class="w-scroll"><b><i class="tri up"></i></b><em></em><b><i class="tri down"></i></b></div>
  </div>
  <div class="status">
    <span class="pg">PÁGINA 1 DE 1</span><span class="wc">69 PALAVRAS</span>
    <svg class="proof" viewBox="0 0 22 20"><path d="M11 3v15M11 3Q6 0 1 2v13q5-1 10 2M11 3q4-3 9-1M11 17h9v-2M14 6l6 7M20 6l-6 7" fill="none" stroke="#dfe6f1" stroke-width="1.500"/></svg>
    <span>PORTUGUÊS (BRASIL)</span>
    <div class="views">
      <button aria-label="Leitura"><svg viewBox="0 0 18 18"><path d="M9 3v14M9 3Q5 0 1 2v13q4-1 8 2 4-3 8-2V2q-4-2-8 1M3 5h4M3 8h4M3 11h4M11 5h4M11 8h4M11 11h4"/></svg></button>
      <button class="cur" aria-label="Impressão"><svg viewBox="0 0 18 18"><path d="M1 1h16v16H1zM4 4h10M4 7h10M4 10h10M4 13h10"/></svg></button>
      <button aria-label="Web"><svg viewBox="0 0 18 18"><path d="M8 16H1V1h14v6M4 4h8M4 7h6M4 10h4"/><circle cx="13" cy="13" r="4" fill="#c3d0e6"/></svg></button>
    </div>
    <b class="pm">−</b>
    <input type="range" min="0" max="100" value="55" aria-label="Zoom">
    <b class="pm">+</b>
    <span class="pct">139%</span>
  </div>
  <footer class="taskbar large">
    <button class="t-start" aria-label="Iniciar"><svg><use href="#start"/></svg></button>
    <button class="t-start" aria-label="Pesquisar"><svg><use href="#search"/></svg></button>
    <button class="t-start" aria-label="Visão de tarefas"><svg><use href="#taskview"/></svg></button>
    <div class="t-apps">
      <button aria-label="Edge"><svg><use href="#edge"/></svg></button>
      <button class="run" aria-label="Explorador"><svg><use href="#explorer"/></svg></button>
      <button aria-label="Email"><svg><use href="#mail"/></svg></button>
      <button aria-label="CCleaner"><svg><use href="#cc"/></svg></button>
      <button aria-label="Uninstaller"><svg><use href="#uu"/></svg></button>
      <button class="run" aria-label="Chrome"><svg><use href="#chrome"/></svg></button>
      <button class="run" aria-label="Astah"><svg><use href="#astah"/></svg></button>
      <button class="run active" aria-label="Word"><svg><use href="#word"/></svg></button>
    </div>
    <div class="tray"><div class="clock"><span>11:47</span><span>03/10/2022</span></div></div>
  </footer>
</section>
</main>
</body>
</html>
```
FILE: styles.css
```css
* { box-sizing: border-box; }
body { margin: 0; font-family: "Open Sans", "Noto Sans", sans-serif; color: #444; background: #fff; }
button { font: inherit; color: inherit; border: 0; padding: 0; margin: 0; background: none; white-space: nowrap; }
h1, h2, h3, ul, p { margin: 0; padding: 0; font-weight: normal; list-style: none; }
svg { display: block; flex: none; }
.defs { position: absolute; width: 0; height: 0; }
.ic18 { width: 18px; height: 18px; }

.desktop { display: flex; min-height: 100vh; }
.screen { flex: 1 1 0; min-width: 0; display: flex; flex-direction: column; }

.tri { display: block; width: 0; height: 0; }
.tri.up { border: 6px solid transparent; border-top: 0; border-bottom: 8px solid #000; }
.tri.down { border: 6px solid transparent; border-bottom: 0; border-top: 8px solid #000; }
.tri.left { border: 6px solid transparent; border-left: 0; border-right: 7px solid #000; }
.tri.right { border: 6px solid transparent; border-right: 0; border-left: 7px solid #000; }

/* Astah window */
.a-title { height: 30px; display: flex; align-items: center; gap: 6px; padding: 0 25px 0 3px; color: #999; font-size: 14px; white-space: nowrap; }
.a-controls { margin-left: auto; display: flex; gap: 45px; }
.a-controls svg { width: 14px; height: 14px; fill: none; stroke: #999; }
.a-menu { height: 24px; display: flex; align-items: center; gap: 9px; padding: 0 4px; border-bottom: 1px solid #9a9a9a; font-size: 14px; color: #666; }
.a-bar { display: flex; align-items: center; background: #efefef; height: 30px; }
.a-bar button { width: 27px; height: 26px; display: flex; align-items: center; justify-content: center; flex: none; }
.a-bar svg { width: 18px; height: 18px; fill: #595959; }
.a-bar .off svg { fill: #c4c6c6; }
.a-bar .sep { margin-left: 5px; }
.a-bar .far { margin-left: 25px; }
.a-bar .drop { width: 38px; justify-content: flex-start; padding-left: 4px; gap: 6px; }
.a-bar .drop::after { content: ""; border: 3px solid transparent; border-bottom: 0; border-top: 6px solid #000; }
.a-bar .drop.off::after { border-top-color: #777; }
.a-bar .wide { width: 42px; }
.a-bar .wide svg { width: 22px; }
.main-bar { padding-left: 10px; }
.a-bar.tool-bar { height: 29px; padding-left: 12px; }
.tool-bar svg { fill: none; stroke: #595959; stroke-width: 1.5px; }
.tool-bar svg.solid { fill: #595959; }
.tool-bar .on { background: #c0dcf3; outline: 1px solid #90c8f6; outline-offset: -1px; }
.tool-bar .on.drop { background: linear-gradient(90deg, #c0dcf3 27px, #efefef 27px); outline: 0; }

.a-work { flex: 1; display: flex; background: #efefef; padding-right: 3px; }
.a-split { width: 13px; border-left: 1px solid #777; border-right: 1px solid #696969; padding: 5px 2px; }
.a-main { flex: 1; min-width: 0; display: flex; flex-direction: column; border-top: 2px solid #696969; }
.a-tabs { height: 25px; }
.a-tab { height: 25px; display: flex; align-items: center; gap: 5px; padding: 0 8px; background: #fff; color: #000; font: 13px "Liberation Sans", sans-serif; border-right: 1px solid #ccc; }
.a-tab b { color: #bbb; }
.a-strip { height: 7px; background: #fff; border: 1px solid #d8d8d8; border-width: 1px 0; }
.a-frame { flex: 1; display: flex; flex-direction: column; border: 1px solid #000; }
.f-title { height: 28px; display: flex; align-items: center; gap: 4px; padding: 0 3px 0 5px; background: linear-gradient(#98b4d3, #b8d0e9); color: #000; font: 15px "Liberation Sans", sans-serif; }
.f-title .ic18 { width: 16px; height: 16px; }
.f-controls { margin-left: auto; display: flex; gap: 2px; }
.f-controls button { width: 39px; height: 24px; display: flex; justify-content: center; align-items: center; border: 1px solid #5c7390; background: linear-gradient(#c3d4e8 50%, #95aecb 50%, #aac5e2); }
.f-controls .close { border-color: #45161c; background: linear-gradient(#e59a8e 50%, #b83c28 50%, #d06a55); }
.f-controls svg { width: 18px; height: 18px; fill: #f2f2f2; stroke: #4c5568; stroke-width: 1px; }
.f-body { flex: 1; display: flex; flex-direction: column; border: solid #b8d0e9; border-width: 0 5px 2px 7px; box-shadow: 1px 1px 0 #39b7d8; }
.c-row { flex: 1; display: flex; }
.canvas { flex: 1; position: relative; min-height: 817px; background: #fff; color: #000; font: 10px/12px "Liberation Sans", Arial, sans-serif; }
.links { position: absolute; left: 0; top: 0; fill: none; stroke: #444; }
.label { position: absolute; }
.pkg { left: 281px; top: 19px; }
.market { left: 780px; top: 46px; }
.vbar { width: 21px; background: #efefef; display: grid; grid-template-rows: 224px 380px 1fr; }
.vbar i { background: #cdcdcd; }
.vbar svg, .hbar svg { width: 12px; height: 12px; fill: none; stroke: #555; stroke-width: 2px; }
.vbar svg { margin: 4px; }
.vbar svg:last-child { align-self: end; }
.hbar { height: 20px; background: #efefef; display: grid; grid-template-columns: 427px 1071px 1fr; align-items: center; }
.hbar i { background: #cdcdcd; height: 19px; }
.hbar svg { margin: 0 4px; }
.hbar svg:last-child { justify-self: end; }
.a-foot { height: 12px; display: flex; align-items: center; gap: 2px; padding-left: 4px; }

/* UML classes on the diagram canvas */
.uml { position: absolute; border: 2px solid #000; background: #ffffcc; white-space: nowrap; }
.uml h3 { font-size: 10px; line-height: 17px; text-align: center; border-bottom: 1px solid #333; }
.uml ul { padding: 3px 0 1px 7px; border-bottom: 1px solid #333; font-size: 9px; }
.uml::after { content: ""; display: block; height: 6px; }
.uml.tall::after { height: 22px; }
.uml.pessoa h3 { line-height: 11px; padding: 3px 0; }
.pessoa { left: 442px; top: 113px; width: 123px; }
.endereco { left: 699px; top: 128px; width: 122px; }
.cliente { left: 348px; top: 294px; width: 123px; }
.comprar { left: 353px; top: 429px; width: 117px; }
.vendedor { left: 546px; top: 282px; width: 147px; }
.venda { left: 794px; top: 271px; width: 161px; }
.pagarpix { left: 707px; top: 407px; width: 106px; }
.pagarcartao { left: 912px; top: 404px; width: 106px; }
.itensprodutos { left: 1134px; top: 283px; width: 106px; }
.estornar { left: 877px; top: 522px; width: 105px; }
.itensnovos { left: 1088px; top: 503px; width: 171px; }
.itensusados { left: 1347px; top: 443px; width: 129px; }
.devolucao { left: 1356px; top: 516px; width: 112px; }
.trocar { left: 946px; top: 672px; width: 129px; }
.coseguir { left: 1215px; top: 672px; width: 151px; }

/* Taskbars */
.taskbar { display: flex; align-items: stretch; color: #111; background: linear-gradient(90deg, #cfe6ee, #d0e4ee 50%, #d3e0ee 70%, #d6daea); }
.taskbar.small { height: 50px; font-size: 16px; }
.taskbar.large { height: 60px; font-size: 18px; }
.taskbar button { display: flex; align-items: center; justify-content: center; }
.small .t-start { width: 60px; }
.small .t-start svg, .small .t-view svg { width: 20px; height: 20px; }
.small .t-view { width: 60px; }
.t-search { width: 430px; background: #fff; border: 1px solid #c4c8ca; display: flex; align-items: center; padding: 0 4px 0 14px; font-size: 18px; }
.t-search .mag { width: 22px; height: 22px; }
.t-search input { flex: 1; min-width: 0; border: 0; padding: 0 0 0 14px; background: none; font: inherit; color: #222; }
.t-search input::placeholder { color: #222; opacity: 1; }
.t-search .deco { width: 92px; height: 40px; }
.t-apps { display: flex; }
.small .t-apps { margin-left: 3px; }
.small .t-apps button { width: 62px; }
.small .t-apps svg { width: 30px; height: 30px; }
.large .t-start { width: 72px; }
.large .t-start svg { width: 24px; height: 24px; }
.large .t-apps { margin-left: 3px; }
.large .t-apps button { width: 75px; }
.large .t-apps svg { width: 36px; height: 36px; }
.t-apps .run { background: linear-gradient(#0078d7, #0078d7) bottom / 84% 3px no-repeat; }
.t-apps .active { background: linear-gradient(#0078d7, #0078d7) bottom / 100% 3px no-repeat, #ebf3f8; }
.tray { margin-left: auto; display: flex; align-items: center; }
.weather { gap: 13px; margin-right: 18px; }
.weather svg { width: 22px; height: 22px; }
.ti { width: 20px; height: 20px; margin-right: 10px; fill: none; stroke: #111; stroke-width: 1.5px; }
.lang { width: 50px; padding-left: 3px; font-size: 14px; }
.clock { display: flex; flex-direction: column; align-items: center; justify-content: space-between; font-size: 14px; line-height: 24px; }
.large .clock { font-size: 17px; line-height: 28px; padding-right: 10px; }
.notif { position: relative; width: 75px; align-self: stretch; padding-right: 9px; }
.notif svg { width: 20px; height: 20px; }
.notif b { position: absolute; right: 20px; bottom: 6px; width: 20px; height: 20px; border-radius: 50%; background: #dcdcdc; border: 1px solid #999; font-size: 13px; line-height: 18px; text-align: center; }

/* Word window */
.w-title { height: 34px; display: flex; align-items: center; padding: 0 6px 0 12px; color: #444; }
.w24 { width: 24px; height: 24px; margin-right: 17px; }
.w20 { width: 20px; height: 20px; margin-right: 19px; }
.w30 { width: 34px; height: 22px; margin-right: 21px; }
.redo { margin-right: 20px; }
.w8 { width: 8px; height: 10px; }
.w-title h1 { flex: 1; font-size: 17px; text-align: center; white-space: nowrap; }
.w-controls { display: flex; }
.w-controls button { width: 38px; height: 30px; display: flex; align-items: center; justify-content: center; font-size: 20px; font-weight: bold; color: #777; }
.w-controls svg { width: 20px; height: 20px; fill: none; stroke: #777; stroke-width: 1.5px; }
.w-tabs { height: 37px; display: flex; align-items: stretch; border-bottom: 2px solid #e1e1e1; font-size: 17px; }
.w-tabs button { padding: 0 18px; }
.w-tabs .file { width: 88px; padding: 0; background: #2b579a; color: #fff; margin-bottom: -2px; margin-right: 2px; }
.w-tabs .sel { color: #2b579a; background: #fff; border: 1px solid #d5d5d5; border-bottom: 0; margin-bottom: -2px; padding: 0 15px; }
.login { margin-left: auto; align-self: center; color: #444; text-decoration: none; padding-right: 8px; font-size: 16px; }
.avatar { width: 36px; height: 36px; }
.ribbon { height: 134px; display: flex; padding: 4px 0; border-bottom: 2px solid #d5d5d5; font-size: 17px; }
.group { display: flex; flex-direction: column; border-right: 1px solid #e1e1e1; flex: none; }
.g-body { display: flex; height: 102px; }
.group h2 { font-size: 15px; line-height: 20px; padding-top: 5px; text-align: center; color: #666; }
.g-modes { width: 446px; }
.g-show { width: 215px; }
.g-zoom { width: 313px; }
.g-win { width: 567px; }
.g-macro { width: 75px; }
.big { width: 84px; height: 102px; line-height: 24px; display: flex; flex-direction: column; align-items: center; }
.big svg { width: 48px; height: 48px; margin: 3px 0 4px; }
.g-modes .big { width: 87px; }
.g-modes .big:first-child { width: 84px; padding-left: 4px; }
.g-modes .web { width: 72px; }
.big.current { background: #c2d5f2; }
.g-zoom .big { width: 62px; }
.g-zoom .big:first-child { margin-left: 4px; }
.g-win .big { width: 70px; }
.g-win .big:nth-child(2) { width: 76px; }
.g-win .big:last-child { width: 83px; }
.g-macro .big { width: 74px; }
.stack { display: flex; flex-direction: column; }
.stack button, .stack label { display: flex; align-items: center; gap: 5px; height: 34px; }
.stack svg { width: 22px; height: 20px; }
.g-show .stack { padding-left: 8px; }
.stack label { gap: 8px; height: 33px; }
.stack input { appearance: none; width: 20px; height: 20px; margin: 0; border: 1px solid #ababab; background: #fff; }
.g-zoom .stack { padding-left: 2px; }
.g-zoom .stack svg { width: 24px; }
.side { border: solid #e1e1e1; border-width: 0 1px; padding-left: 8px; width: 267px; color: #a6a6a6; }
.side svg { width: 26px; }
.car { display: inline-block; border: 4px solid transparent; border-bottom: 0; border-top: 5px solid #666; vertical-align: middle; }
.collapse { margin: auto 12px 4px auto; }
.collapse svg { width: 14px; height: 14px; }
.w-doc { flex: 1; display: flex; background: linear-gradient(#fdfdfd, #efefef); padding-left: 120px; }
.paper { flex: 1; margin: 36px 121px 0 0; border: 1px solid #c6c6c6; border-bottom: 0; background: #fff; padding: 196px 0 0 234px; color: #111; font: 29px/40px Lato, "Open Sans", sans-serif; white-space: nowrap; }
.paper p { margin-bottom: 22px; }
mark { background: #ff0; color: inherit; padding: 1px 0; }
.blue { background: #00f; }
.olive { background: #808000; }
.red { background: #f00; }
.green { background: #0f0; }
.pink { background: #f0f; }
.cyan { background: #0ff; }
.sq { text-decoration: underline wavy #f00 1px; text-underline-offset: 4px; text-decoration-skip-ink: none; }
.w-scroll { width: 24px; display: grid; grid-template-rows: 22px 236px 1fr 22px; row-gap: 3px; padding: 4px 1px 4px 0; background: linear-gradient(#fdfdfd 10px, #ececec 200px, #e4e4e4); }
.w-scroll b, .w-scroll em { border: 1px solid #c6c6c6; background: #fff; display: grid; place-items: center; }
.w-scroll b:last-child { grid-row: 4; }
.w-scroll .tri.up { border-bottom-color: #777; border-bottom-width: 6px; }
.w-scroll .tri.down { border-top-color: #777; border-top-width: 6px; }
.status { height: 32px; display: flex; align-items: center; background: #2b579a; color: #e8eef7; font-size: 15px; padding: 0 7px 0 9px; white-space: nowrap; }
.pg, .wc { margin-right: 23px; }
.proof { width: 22px; height: 20px; margin-right: 21px; }
.views { margin-left: auto; display: flex; align-self: stretch; margin-right: 5px; }
.views button { width: 49px; display: flex; align-items: center; justify-content: center; }
.views svg { width: 18px; height: 18px; fill: none; stroke: #dfe6f1; stroke-width: 1.5px; }
.views .cur { background: #1b4788; }
.pm { font-size: 22px; line-height: 30px; width: 16px; text-align: center; color: #fff; }
.status input { appearance: none; width: 152px; height: 16px; margin: 0 4px; background: linear-gradient(#a9bad6, #a9bad6) center / 100% 2px no-repeat; }
.status input::-webkit-slider-thumb { appearance: none; width: 6px; height: 16px; background: #fff; }
.pct { margin-left: 18px; width: 40px; }
```
